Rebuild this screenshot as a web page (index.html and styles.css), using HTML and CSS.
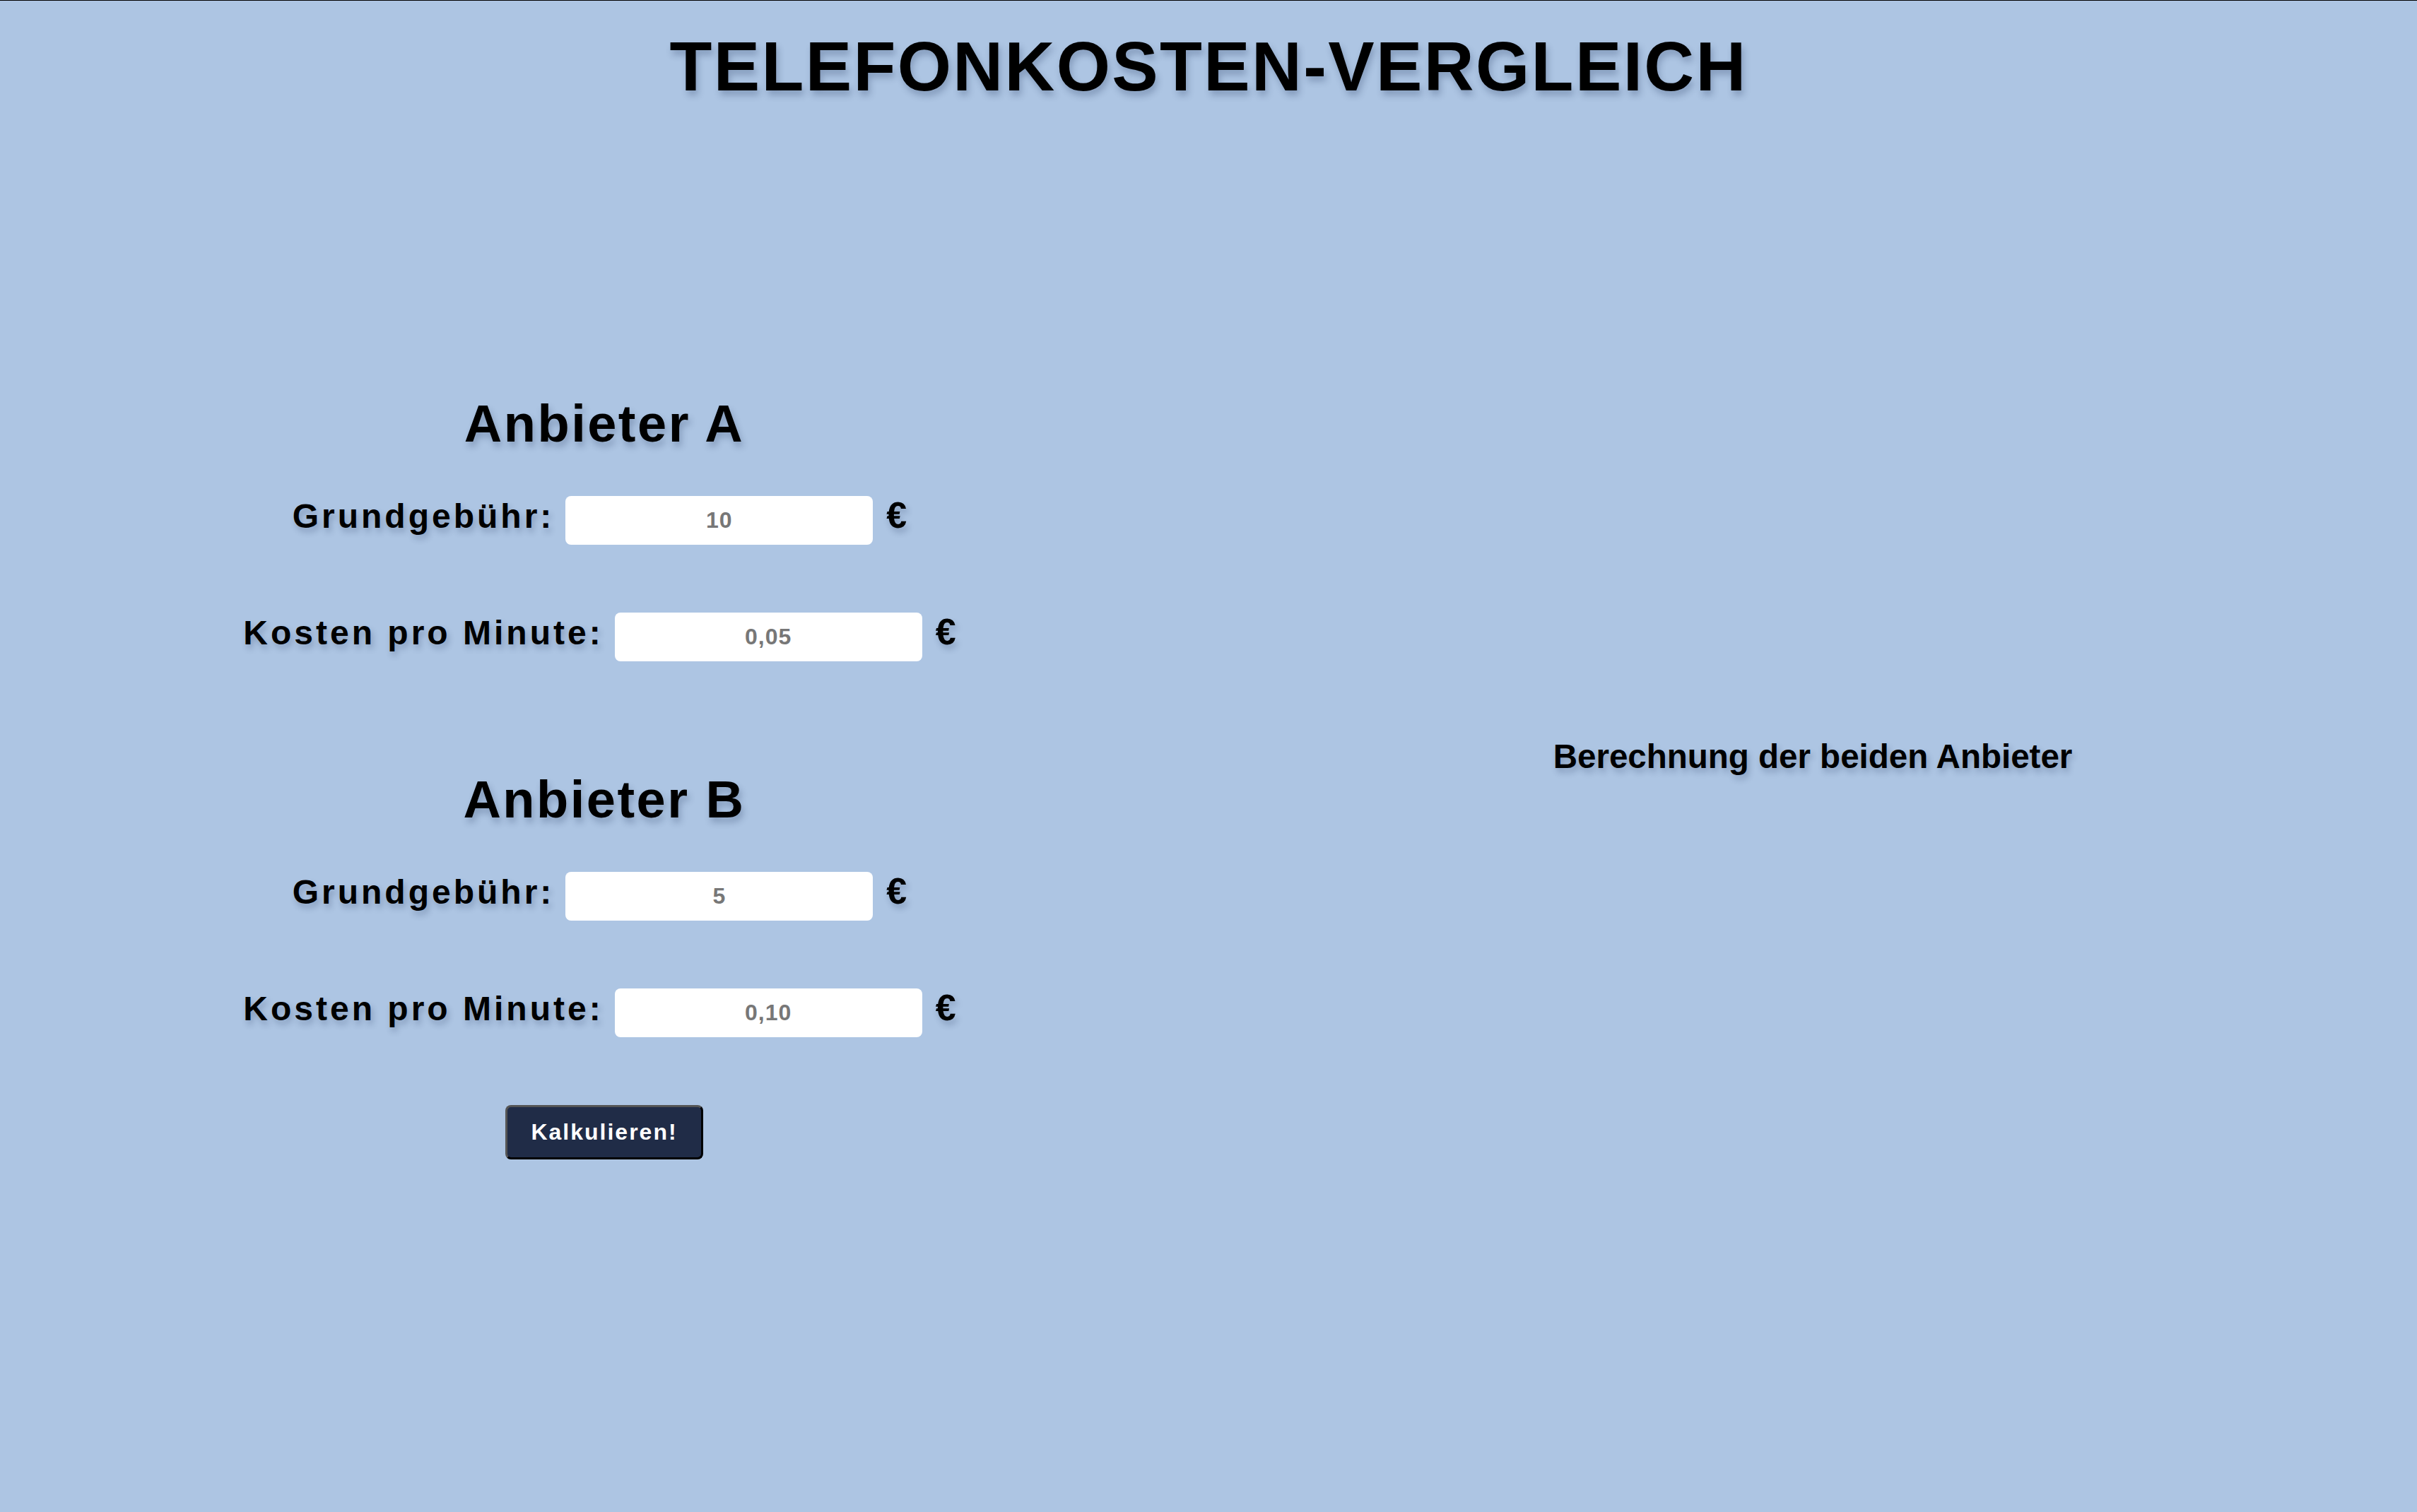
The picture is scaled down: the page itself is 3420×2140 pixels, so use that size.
FILE: index.html
```html
<!DOCTYPE html>
<html lang="de">
<head>
<meta charset="utf-8">
<title>Telefonkosten-Vergleich</title>
<link rel="stylesheet" href="styles.css">
</head>
<body>
  <h1 class="title">TELEFONKOSTEN-VERGLEICH</h1>
  <main class="columns">
    <section class="form-col">
      <div class="provider">
        <h2 class="provider-title">Anbieter A</h2>
        <div class="row">
          <label class="label" for="a-grund">Grundgebühr:</label>
          <input class="field" id="a-grund" type="text" value="10">
          <span class="euro">€</span>
        </div>
        <div class="row">
          <label class="label" for="a-min">Kosten pro Minute:</label>
          <input class="field" id="a-min" type="text" value="0,05">
          <span class="euro">€</span>
        </div>
      </div>
      <div class="provider">
        <h2 class="provider-title">Anbieter B</h2>
        <div class="row">
          <label class="label" for="b-grund">Grundgebühr:</label>
          <input class="field" id="b-grund" type="text" value="5">
          <span class="euro">€</span>
        </div>
        <div class="row">
          <label class="label" for="b-min">Kosten pro Minute:</label>
          <input class="field" id="b-min" type="text" value="0,10">
          <span class="euro">€</span>
        </div>
      </div>
      <button class="calc-btn" type="button">Kalkulieren!</button>
    </section>
    <section class="result-col">
      <p class="result-text">Berechnung der beiden Anbieter</p>
    </section>
  </main>
</body>
</html>
```

FILE: styles.css
```css
html, body {
  margin: 0;
  padding: 0;
}

body {
  background: #adc5e3;
  border-top: 1px solid #000;
  font-family: "Liberation Sans", Arial, Helvetica, sans-serif;
  color: #000;
  min-height: 2139px;
}

.title {
  margin: 37px 0 0;
  font-size: 98px;
  line-height: 113px;
  font-weight: 700;
  letter-spacing: 2.4px;
  text-align: center;
  text-shadow: 3px 7px 10px rgba(20, 40, 80, 0.25);
}

.columns {
  display: flex;
  align-items: center;
  margin-top: 349px;
}

.form-col {
  width: 50%;
  display: flex;
  flex-direction: column;
  align-items: center;
  padding-top: 57px;
}

.result-col {
  width: 50%;
  display: flex;
  justify-content: center;
}

.provider {
  display: flex;
  flex-direction: column;
  align-items: center;
}

.provider + .provider {
  margin-top: 153px;
}

.provider-title {
  margin: 0 0 59px;
  font-size: 74px;
  line-height: 86px;
  font-weight: 700;
  letter-spacing: 2.5px;
  text-shadow: 3px 7px 10px rgba(20, 40, 80, 0.25);
}

.row {
  display: flex;
  align-items: baseline;
  justify-content: center;
  gap: 16px;
  width: 100%;
}

.row + .row {
  margin-top: 96px;
}

.label {
  font-size: 48px;
  line-height: 54px;
  font-weight: 700;
  letter-spacing: 4px;
  text-shadow: 3px 6px 9px rgba(20, 40, 80, 0.25);
}

.euro {
  width: 42px;
  margin-left: 3px;
  font-size: 52px;
  line-height: 40px;
  font-weight: 700;
  text-shadow: 3px 6px 9px rgba(20, 40, 80, 0.25);
}

.field {
  box-sizing: border-box;
  width: 435px;
  height: 69px;
  padding: 0;
  border: none;
  border-radius: 8px;
  background: #fff;
  font-family: "Liberation Sans", Arial, Helvetica, sans-serif;
  font-size: 32px;
  font-weight: 700;
  color: #777;
  text-align: center;
  letter-spacing: 1px;
  outline: none;
}

.calc-btn {
  box-sizing: border-box;
  margin-top: 96px;
  width: 280px;
  height: 77px;
  padding: 0;
  border: 3px solid;
  border-color: #555 #000 #000 #555;
  border-radius: 8px;
  background: #202c47;
  color: #fff;
  font-family: "Liberation Sans", Arial, Helvetica, sans-serif;
  font-size: 32px;
  font-weight: 700;
  letter-spacing: 2px;
}

.result-text {
  margin: 0;
  font-size: 47.5px;
  line-height: 54px;
  font-weight: 700;
  text-shadow: 3px 6px 9px rgba(20, 40, 80, 0.25);
}
```
